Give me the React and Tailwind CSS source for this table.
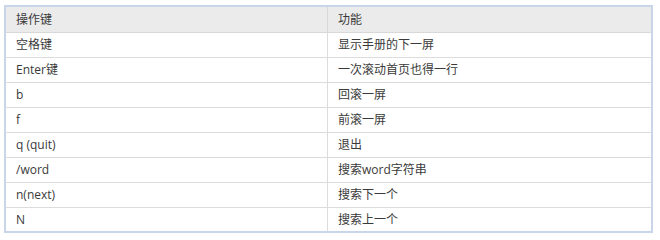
import React from "react";

const rows = [
  ["空格键", "显示手册的下一屏"],
  ["Enter键", "一次滚动首页也得一行"],
  ["b", "回滚一屏"],
  ["f", "前滚一屏"],
  ["q (quit)", "退出"],
  ["/word", "搜索word字符串"],
  ["n(next)", "搜索下一个"],
  ["N", "搜索上一个"],
];

const App = () => {
  return (
    <div className="w-[660px] h-[240px] bg-white pt-[5px] pl-[4px]">
      <div
        className="w-[649px] border-2 border-[#c9d6ea] text-[12px] text-[#3a3a3a]"
        style={{ fontFamily: '"Open Sans", "Noto Sans CJK SC", sans-serif' }}
      >
        <div className="grid grid-cols-[322px_1fr] h-[26px] bg-[#ebebeb] border-b border-[#d8d8d8]">
          <div className="flex items-center pl-[10px] border-r border-[#d8d8d8]">操作键</div>
          <div className="flex items-center pl-[10px]">功能</div>
        </div>
        {rows.map(([k, v], i) => (
          <div
            key={k}
            className={
              i === rows.length - 1
                ? "grid grid-cols-[322px_1fr] h-[23px]"
                : "grid grid-cols-[322px_1fr] h-[25px] border-b border-[#dcdcdc]"
            }
          >
            <div className="flex items-center pl-[10px] border-r border-[#dcdcdc]">{k}</div>
            <div className="flex items-center pl-[10px]">{v}</div>
          </div>
        ))}
      </div>
    </div>
  );
};

export default App;
